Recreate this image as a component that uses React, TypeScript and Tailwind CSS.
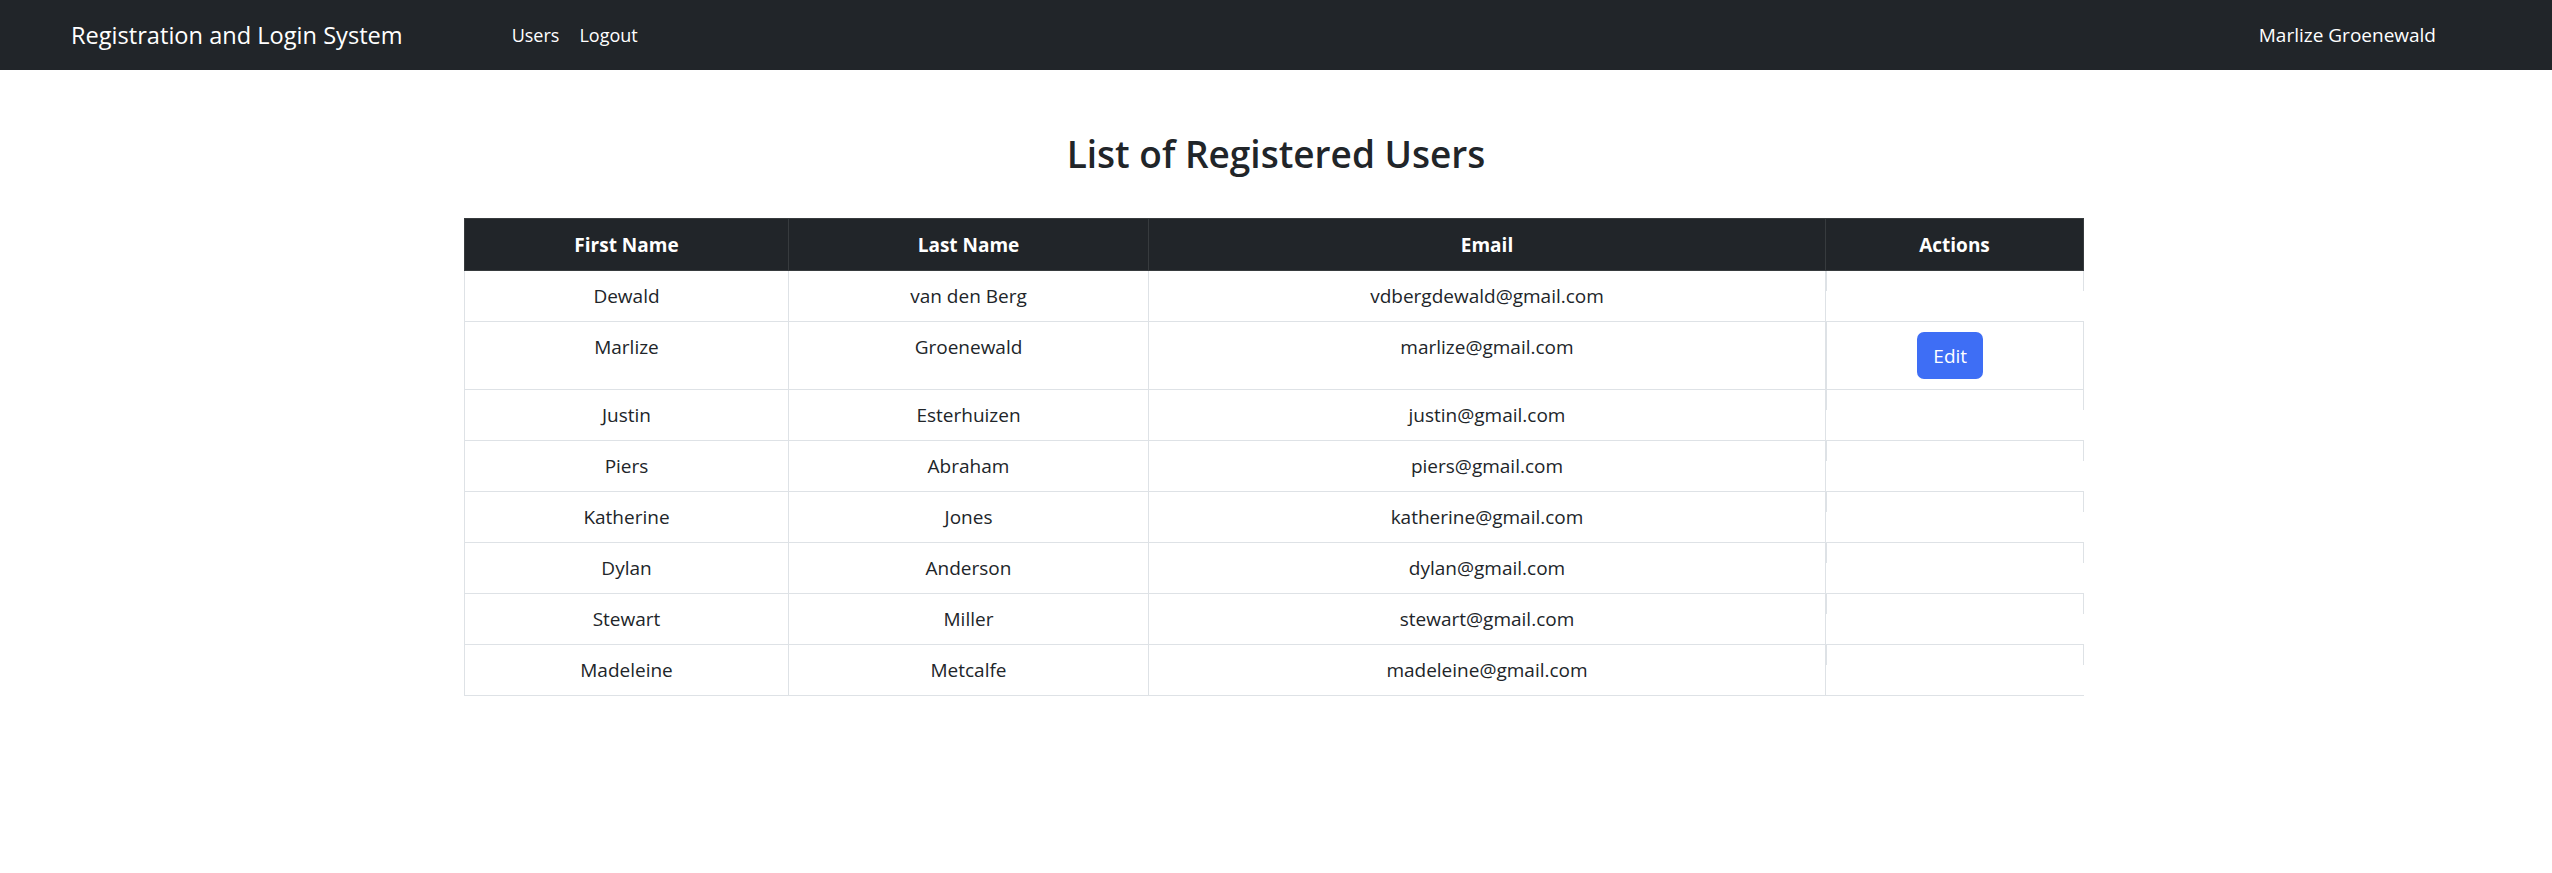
const users = [
  { first: "Dewald", last: "van den Berg", email: "vdbergdewald@gmail.com", edit: false },
  { first: "Marlize", last: "Groenewald", email: "marlize@gmail.com", edit: true },
  { first: "Justin", last: "Esterhuizen", email: "justin@gmail.com", edit: false },
  { first: "Piers", last: "Abraham", email: "piers@gmail.com", edit: false },
  { first: "Katherine", last: "Jones", email: "katherine@gmail.com", edit: false },
  { first: "Dylan", last: "Anderson", email: "dylan@gmail.com", edit: false },
  { first: "Stewart", last: "Miller", email: "stewart@gmail.com", edit: false },
  { first: "Madeleine", last: "Metcalfe", email: "madeleine@gmail.com", edit: false },
];

export default function App() {
  return (
    <div className="min-h-[873px] bg-white font-['Open_Sans','Noto_Sans',sans-serif] text-[#212529]">
      <nav className="flex h-[70px] items-center bg-[#212529] text-white">
        <span className="ml-[71px] text-[23.6px] leading-[36px]">Registration and Login System</span>
        <div className="ml-[99px] flex text-[18px]">
          <span className="px-[10px]">Users</span>
          <span className="px-[10px]">Logout</span>
        </div>
        <span className="ml-auto mr-[116px] text-[19px]">Marlize Groenewald</span>
      </nav>

      <h2 className="mt-[60px] text-center text-[37px] font-semibold leading-[48px]">List of Registered Users</h2>

      <div className="ml-[464px] mt-[40px] w-[1619px]">
        <table className="w-[1619px] table-fixed border-collapse text-[19px]">
          <colgroup>
            <col className="w-[324px]" />
            <col className="w-[360px]" />
            <col className="w-[677px]" />
            <col className="w-[258px]" />
          </colgroup>
          <thead>
            <tr className="bg-[#212529] text-white">
              {["First Name", "Last Name", "Email", "Actions"].map((h) => (
                <th key={h} className="h-[52px] border border-[#373b3e] px-[10px] text-center font-bold leading-[30px]">
                  {h}
                </th>
              ))}
            </tr>
          </thead>
          <tbody>
            {users.map((u) => (
              <tr key={u.email}>
                <td className="border border-[#dee2e6] px-[10px] py-[10px] text-center align-top leading-[30px]">{u.first}</td>
                <td className="border border-[#dee2e6] px-[10px] py-[10px] text-center align-top leading-[30px]">{u.last}</td>
                <td className="border border-[#dee2e6] px-[10px] py-[10px] text-center align-top leading-[30px]">{u.email}</td>
                <td className="border-y border-l border-[#dee2e6] p-0 align-top">
                  <div className="flex justify-center border-x border-[#dee2e6] py-[10px] pr-[9px]">
                    {u.edit && (
                      <button className="h-[47px] w-[66px] rounded-[7px] bg-[#3e6ef5] text-[19px] leading-[30px] text-white">
                        Edit
                      </button>
                    )}
                  </div>
                </td>
              </tr>
            ))}
          </tbody>
        </table>
      </div>
    </div>
  );
}
